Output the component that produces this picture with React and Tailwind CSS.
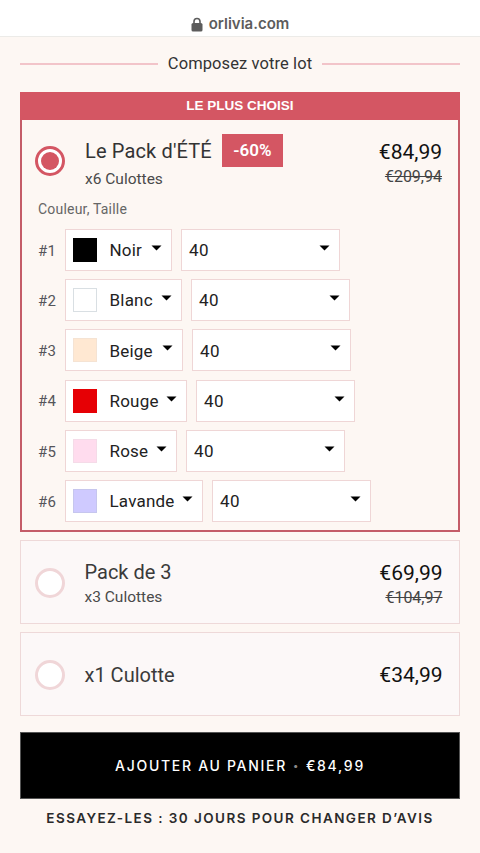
import React from 'react';

const font = "font-['Roboto',sans-serif]";
const wide = "font-['Inter',sans-serif]";

const rows = [
  { n: '#1', color: 'Noir', swatch: 'bg-black border-black', w: 'w-[107px]' },
  { n: '#2', color: 'Blanc', swatch: 'bg-white border-[#d9dfe3]', w: 'w-[117px]' },
  { n: '#3', color: 'Beige', swatch: 'bg-[#ffe8d2] border-[#f5e3d3]', w: 'w-[118px]' },
  { n: '#4', color: 'Rouge', swatch: 'bg-[#e60005] border-[#e60005]', w: 'w-[122px]' },
  { n: '#5', color: 'Rose', swatch: 'bg-[#ffdcee] border-[#f5dbe8]', w: 'w-[112px]' },
  { n: '#6', color: 'Lavande', swatch: 'bg-[#cfcaff] border-[#c6c6ee]', w: 'w-[138px]' },
];

function Caret({ className }) {
  return (
    <svg width="11" height="6" viewBox="0 0 11 6" className={className}>
      <path d="M0.5 0.5h10L5.5 5.5z" fill="#000" />
    </svg>
  );
}

function LockIcon() {
  return (
    <svg width="12" height="15" viewBox="0 0 12 15" className="mb-[3px]">
      <path d="M3 7V4.5a3 3 0 0 1 6 0V7" fill="none" stroke="#5c5c5c" strokeWidth="1.6" />
      <rect x="0.5" y="6" width="11" height="8.5" rx="1.6" fill="#5c5c5c" />
    </svg>
  );
}

function VariantRow({ n, color, swatch, w }) {
  return (
    <div className="flex items-center h-[42px]">
      <span className="w-[27px] pt-[2px] text-[15px] text-[#55555a] tracking-[0.2px]">{n}</span>
      <div className={`${w} h-[42px] flex items-center bg-white border-[1.5px] border-[#efd6d6] pl-[6.5px] pr-[9px]`}>
        <span className={`w-6 h-6 border shrink-0 ${swatch}`} />
        <span className="ml-[13px] pt-[2px] text-[17px] text-[#222] tracking-[0.2px]">{color}</span>
        <Caret className="ml-auto -mt-1" />
      </div>
      <div className="w-[159px] h-[42px] ml-[9px] flex items-center bg-white border-[1.5px] border-[#efd6d6] pl-[7px] pr-[9px]">
        <span className="pt-[2px] text-[17px] text-[#222] tracking-[0.5px]">40</span>
        <Caret className="ml-auto -mt-1" />
      </div>
    </div>
  );
}

function PackOption({ title, sub, price, old }) {
  return (
    <div className="h-[84px] pt-[2px] flex items-center bg-[#fcf8f8] border-[1.5px] border-[#eed9d9] pl-[13.5px] pr-[16.5px]">
      <span className="w-[30px] h-[30px] rounded-full border-[3px] border-[#f0d6d8] bg-white shrink-0" />
      <div className="ml-[20px]">
        <div className="text-[20px] leading-[26px] text-[#3a3a3a]">{title}</div>
        {sub && <div className="text-[15.5px] leading-[22px] text-[#4a4a4a] mt-[1px]">{sub}</div>}
      </div>
      <div className="ml-auto text-right">
        <div className="text-[21px] leading-[28px] text-[#111]">{price}</div>
        {old && <div className="text-[16px] leading-[20px] text-[#444] line-through mt-[1px]">{old}</div>}
      </div>
    </div>
  );
}

export default function App() {
  return (
    <div className={`w-[480px] h-[853px] overflow-hidden bg-[#fdf7f3] ${font}`}>
      <div className="h-[37px] bg-white border-b border-[#ecebe8] flex items-end justify-center pb-[1px] gap-[6px]">
        <LockIcon />
        <span className={`${wide} text-[15px] font-semibold text-[#5c5c5c] leading-[22px]`}>orlivia.com</span>
      </div>

      <div className="px-5">
        <div className="flex items-center h-[24px] mt-[15px]">
          <span className="flex-1 h-[2px] bg-[#f2c4c9]" />
          <span className="px-[10px] text-[16.5px] text-[#333] tracking-[0.1px]">Composez votre lot</span>
          <span className="flex-1 h-[2px] bg-[#f2c4c9]" />
        </div>

        <div className="mt-[16px] h-[440px] border-2 border-[#c45c68]">
          <div className="-mx-[2px] -mt-[2px] h-[28px] bg-[#d45663] flex items-center justify-center text-white text-[13.5px] font-bold font-['Liberation_Sans',sans-serif]">
            LE PLUS CHOISI
          </div>

          <div className="flex items-start pl-[13px] pr-[16px] pt-[14px]">
            <span className="mt-[12px] w-[30px] h-[30px] rounded-full border-[3px] border-[#d45663] bg-white flex items-center justify-center shrink-0">
              <span className="w-[18px] h-[18px] rounded-full bg-[#d45663]" />
            </span>
            <div className="ml-[20px]">
              <div className="flex items-start">
                <span className="pt-[1px] text-[20px] leading-[33px] text-[#333] tracking-[0.15px]">Le Pack d'ÉTÉ</span>
                <span className="ml-[10px] w-[61px] h-[33px] bg-[#d45663] text-white text-[17px] font-semibold flex items-center justify-center">-60%</span>
              </div>
              <div className="text-[15.5px] leading-[22px] text-[#4a4a4a]">x6 Culottes</div>
            </div>
            <div className="ml-auto text-right pt-[3px]">
              <div className="text-[21px] leading-[30px] text-[#111]">€84,99</div>
              <div className="text-[16px] leading-[20px] text-[#444] line-through">€209,94</div>
            </div>
          </div>

          <div className="pl-[16px] mt-[9px] text-[14px] leading-[20px] text-[#666] tracking-[0.2px]">Couleur, Taille</div>

          <div className="pl-[16px] mt-[10px] flex flex-col gap-[8.2px]">
            {rows.map((r) => (
              <VariantRow key={r.n} {...r} />
            ))}
          </div>
        </div>

        <div className="mt-[8px] flex flex-col gap-[8px]">
          <PackOption title="Pack de 3" sub="x3 Culottes" price="€69,99" old="€104,97" />
          <PackOption title="x1 Culotte" price="€34,99" />
        </div>

        <button className={`${wide} mt-[16px] w-full h-[67px] bg-black border border-[#555] text-white text-[14px] font-medium tracking-[1.7px] flex items-center justify-center`}>
          AJOUTER AU PANIER
          <span className="mx-[6px] text-[#888] text-[10px]">•</span>
          €84,99
        </button>

        <div className={`${wide} mt-[10px] text-center text-[13.5px] leading-[18px] font-semibold text-[#2a2a2a] tracking-[1.43px] whitespace-nowrap`}>
          ESSAYEZ-LES : 30 JOURS POUR CHANGER D’AVIS
        </div>
      </div>
    </div>
  );
}
